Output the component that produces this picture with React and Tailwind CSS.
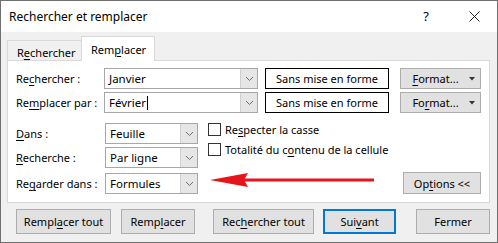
import React from 'react';

const FONT = "font-['Noto_Sans',_'Open_Sans',_sans-serif]";

const U = ({ children }) => (
  <span className="underline decoration-1 underline-offset-[2px]">{children}</span>
);

function Chevron() {
  return (
    <svg width="9" height="6" viewBox="0 0 9 6">
      <polyline points="1,1 4.5,4.5 8,1" fill="none" stroke="#6e6e6e" strokeWidth="1" />
    </svg>
  );
}

function Combo({ className = '', children }) {
  return (
    <div className={`flex h-[21px] border border-[#a7a7a7] bg-white ${className}`}>
      <div className="flex-1 flex items-center pl-[4px] whitespace-nowrap text-[11.5px]">{children}</div>
      <div className="w-[17px] flex items-center justify-center bg-[#e6e6e6] border-l border-[#cfcfcf]">
        <Chevron />
      </div>
    </div>
  );
}

function Btn({ className = '', children }) {
  return (
    <div className={`flex items-center justify-center border border-[#adadad] bg-[#e1e1e1] whitespace-nowrap ${className}`}>
      {children}
    </div>
  );
}

function FormatBtn({ children }) {
  return (
    <Btn className="ml-[11px] w-[81px] h-[21px] relative">
      <span className="mr-[10px]">{children}</span>
      <svg className="absolute right-[5px] top-[8px]" width="6" height="4" viewBox="0 0 6 4">
        <polygon points="0,0 6,0 3,3.5" fill="#333" />
      </svg>
    </Btn>
  );
}

function Check({ children }) {
  return (
    <div className="flex items-center h-[13px] whitespace-nowrap">
      <div className="w-[13px] h-[13px] border border-[#333] bg-white shrink-0" />
      <span className="ml-[4px]">{children}</span>
    </div>
  );
}

export default function App() {
  return (
    <div className={`w-[498px] h-[243px] border border-[#6f6f6f] bg-[#f0f0f0] text-[11px] text-black leading-none flex flex-col overflow-hidden ${FONT}`}>
      {/* title bar */}
      <div className="h-[31px] bg-white flex items-center shrink-0">
        <span className="ml-[8px] text-[12px]">Rechercher et remplacer</span>
        <span className="ml-auto mr-[40px] text-[13px]">?</span>
        <svg className="mr-[17px]" width="11" height="11" viewBox="0 0 11 11">
          <path d="M0.5 0.5 L10.5 10.5 M10.5 0.5 L0.5 10.5" stroke="#222" strokeWidth="1" />
        </svg>
      </div>

      <div className="pl-[6px] flex flex-col">
        {/* tabs */}
        <div className="flex items-end h-[28px]">
          <div className="w-[75px] h-[20px] border border-b-0 border-[#d9d9d9] flex items-center pl-[9px] pt-[3px] whitespace-nowrap">
            R<U>e</U>chercher
          </div>
          <div className="w-[74px] h-[25px] -mb-px -ml-px relative z-10 bg-white border border-b-0 border-[#d9d9d9] flex items-center pl-[9px] pt-[1px] whitespace-nowrap">
            Rem<U>p</U>lacer
          </div>
        </div>

        {/* panel */}
        <div className="w-[483px] h-[143px] bg-white border border-[#d9d9d9] px-[8px] pt-[7px] whitespace-nowrap">
          <div className="flex items-center">
            <div className="w-[88px]">Re<U>c</U>hercher :</div>
            <Combo className="w-[154px]">Janvier</Combo>
            <div className="ml-[7px] w-[124px] h-[21px] border border-black flex items-center justify-center">Sans mise en forme</div>
            <FormatBtn><U>F</U>ormat...</FormatBtn>
          </div>
          <div className="flex items-center mt-[3px]">
            <div className="w-[88px]">Re<U>m</U>placer par :</div>
            <Combo className="w-[154px]">
              Février<span className="ml-px w-px h-[14px] bg-black" />
            </Combo>
            <div className="ml-[7px] w-[124px] h-[21px] border border-black flex items-center justify-center">Sans mise en forme</div>
            <FormatBtn>Fo<U>r</U>mat...</FormatBtn>
          </div>

          <div className="flex mt-[10px] relative">
            <div className="flex flex-col">
              <div className="flex items-center">
                <div className="w-[89px]"><U>D</U>ans :</div>
                <Combo className="w-[93px]">Feuille</Combo>
              </div>
              <div className="flex items-center mt-[3px]">
                <div className="w-[89px]"><U>R</U>echerche :</div>
                <Combo className="w-[93px]">Par ligne</Combo>
              </div>
              <div className="flex items-center mt-[5px]">
                <div className="w-[89px]">Re<U>g</U>arder dans :</div>
                <Combo className="w-[93px]">Formules</Combo>
              </div>
            </div>

            <div className="ml-[10px] flex flex-col gap-[7px]">
              <Check>Re<U>s</U>pecter la casse</Check>
              <Check>Totalité du c<U>o</U>ntenu de la cellule</Check>
            </div>

            <Btn className="ml-auto self-end w-[78px] h-[22px]">Op<U>t</U>ions &lt;&lt;</Btn>

            {/* annotation arrow */}
            <svg className="absolute left-[194px] top-[49px]" width="164" height="16" viewBox="0 0 164 16">
              <polygon points="0,8 38,1 34,8 38,15" fill="#e8141c" />
              <rect x="30" y="6.5" width="134" height="3" fill="#e8141c" />
            </svg>
          </div>
        </div>

        {/* bottom buttons */}
        <div className="flex mt-[6px] ml-[9px]">
          <Btn className="w-[95px] h-[25px]">Rempl<U>a</U>cer tout</Btn>
          <Btn className="ml-[10px] w-[74px] h-[25px]">Remp<U>l</U>acer</Btn>
          <Btn className="ml-[18px] w-[101px] h-[25px]">Rec<U>h</U>ercher tout</Btn>
          <Btn className="ml-[9px] w-[73px] h-[25px] !border-2 !border-[#0078d7]">Sui<U>v</U>ant</Btn>
          <Btn className="ml-[20px] w-[74px] h-[25px]">Fermer</Btn>
        </div>
      </div>
    </div>
  );
}
